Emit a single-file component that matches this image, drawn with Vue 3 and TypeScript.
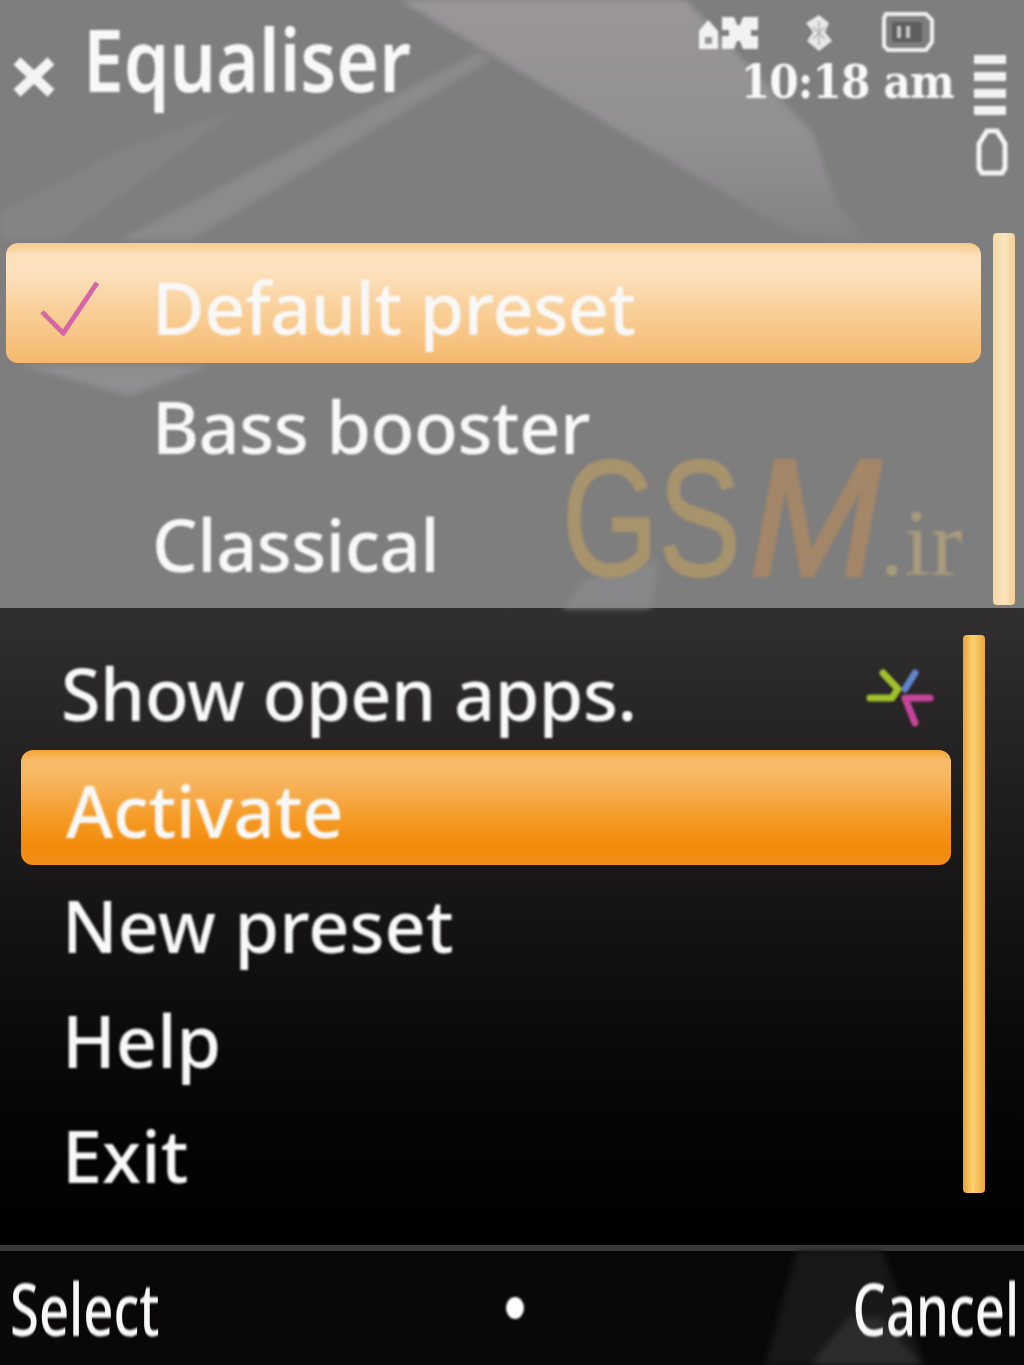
<template>
  <div class="screen">
    <section class="top">
      <svg class="backdrop" viewBox="0 0 1024 608" preserveAspectRatio="none" aria-hidden="true">
        <defs>
          <linearGradient id="fade" x1="0" y1="0" x2="0" y2="1">
            <stop offset="0" stop-color="#9a969a" />
            <stop offset="0.6" stop-color="#928f92" />
            <stop offset="1" stop-color="#828182" />
          </linearGradient>
        </defs>
        <polygon points="400,0 686,0 813,133 838,205 870,245 790,232" fill="url(#fade)" />
        <polygon points="478,52 490,60 190,240 120,240" fill="#8e8e8e" opacity="0.8" />
        <polygon points="0,213 120,150 240,108 60,240 0,240" fill="#888" opacity="0.7" />
        <polygon points="20,365 210,365 130,396" fill="#8f8f92" />
        <polygon points="562,608 585,580 660,560 650,608" fill="#88888a" />
      </svg>

      <header class="header">
        <svg class="close" viewBox="0 0 44 40" aria-hidden="true">
          <path d="M5 4 L39 36 M39 4 L5 36" stroke="#f4f4f4" stroke-width="10" />
        </svg>
        <h1 class="title">Equaliser</h1>
        <div class="status">
          <div class="status-icons">
            <svg class="ic-net" viewBox="0 0 62 36" aria-hidden="true">
              <path d="M1 34 V16 L10 5 L20 16 V34 Z M7 22 h7 v7 h-7 Z" fill="#f2f2f2" fill-rule="evenodd" />
              <path d="M24 2 h12 l3 8 h3 l3 -8 h15 v13 h-7 v6 h7 v13 H45 l-3 -8 h-3 l-3 8 H24 V21 h7 v-6 h-7 Z" fill="#f2f2f2" />
            </svg>
            <svg class="ic-bt" viewBox="0 0 28 36" aria-hidden="true">
              <path d="M14 0 L24 8 L20 17 L27 26 L14 36 L2 26 L8 17 L1 8 Z" fill="#e8e8e8" />
              <path d="M14 6 V30 M8 12 L20 24 M8 24 L20 12" stroke="#b0b0b0" stroke-width="1.5" />
            </svg>
            <svg class="ic-sim" viewBox="0 0 52 40" aria-hidden="true">
              <path d="M4 2 H44 L50 8 V30 L44 38 H6 L2 34 V6 Z" fill="none" stroke="#f0f0f0" stroke-width="4" />
              <rect x="10" y="10" width="30" height="20" fill="#5e5e5e" />
              <path d="M17 14 v12 M26 14 v12" stroke="#c8c8c8" stroke-width="4" />
            </svg>
          </div>
          <div class="clock">10:18 am</div>
        </div>
        <div class="signal">
          <div class="bars">
            <i v-for="n in 4" :key="n"></i>
          </div>
          <svg class="ic-batt" viewBox="0 0 32 48" aria-hidden="true">
            <path d="M3 16 L11 3 H21 L29 16 V40 L26 45 H6 L3 40 Z" fill="none" stroke="#f4f4f4" stroke-width="5" />
          </svg>
        </div>
      </header>

      <div class="list-wrap">
        <ul class="list">
          <li
            v-for="(name, i) in presets"
            :key="name"
            class="row"
            :class="{ active: i === 0 }"
          >
            <svg v-if="i === 0" class="check" viewBox="0 0 64 58" aria-hidden="true">
              <path d="M3 33 L25 55 L60 3" fill="none" stroke="#d665a8" stroke-width="5" />
            </svg>
            <span class="row-text">{{ name }}</span>
          </li>
        </ul>
        <div class="scroll light"></div>
      </div>

      <div class="watermark"><span class="gs">GS</span><span class="m">M</span><span class="ir">.ir</span></div>
    </section>

    <section class="menu">
      <div class="menu-body">
        <ul class="menu-list">
          <li
            v-for="item in menuItems"
            :key="item"
            class="menu-row"
            :class="{ active: item === 'Activate', first: item === 'Show open apps.' }"
          >
            <span>{{ item }}</span>
            <svg v-if="item === 'Show open apps.'" class="apps" viewBox="0 0 68 60" aria-hidden="true">
              <path d="M17 6 L32 22 L26 31 L4 31" fill="none" stroke="#a0c02c" stroke-width="7" stroke-linecap="round" stroke-linejoin="round" />
              <path d="M49 6 L39 22" stroke="#5f86c8" stroke-width="7" stroke-linecap="round" />
              <path d="M64 31 H39 L49 56" fill="none" stroke="#c8459a" stroke-width="7" stroke-linecap="round" stroke-linejoin="round" />
            </svg>
          </li>
        </ul>
        <div class="scroll amber"></div>
      </div>
    </section>

    <footer class="softkeys">
      <svg class="backdrop" viewBox="0 0 1024 113" preserveAspectRatio="none" aria-hidden="true">
        <polygon points="797,0 882,0 925,113 765,113" fill="#1a1719" />
        <polygon points="850,65 880,65 921,113 810,113" fill="#2e2b2e" />
      </svg>
      <span class="key">Select</span>
      <span class="dot"></span>
      <span class="key right">Cancel</span>
    </footer>
  </div>
</template>

<script setup lang="ts">
const presets: string[] = ['Default preset', 'Bass booster', 'Classical']
const menuItems: string[] = ['Show open apps.', 'Activate', 'New preset', 'Help', 'Exit']
</script>

<style>
html,
body {
  margin: 0;
  background: #000;
}
</style>

<style scoped>
.screen {
  position: relative;
  width: 1024px;
  height: 1365px;
  display: flex;
  flex-direction: column;
  overflow: hidden;
  font-family: "Noto Sans", "DejaVu Sans", sans-serif;
  font-weight: 500;
  color: #f8f8f8;
}
.top {
  position: relative;
  height: 608px;
  flex: none;
  background: #7e7e7e;
}
.backdrop {
  position: absolute;
  inset: 0;
  width: 100%;
  height: 100%;
  filter: blur(3px);
}
.header {
  position: relative;
  height: 233px;
  display: flex;
  align-items: flex-start;
  box-sizing: border-box;
  padding: 12px 15px 0 12px;
}
.close {
  width: 44px;
  height: 40px;
  margin-top: 45px;
  filter: blur(1px);
}
.title {
  flex: none;
  margin: -12px 0 0 27px;
  font-size: 86px;
  font-weight: 600;
  line-height: 118px;
  white-space: nowrap;
  transform: scaleX(0.85);
  transform-origin: left center;
  filter: blur(1px);
}
.status {
  margin-left: auto;
  width: 256px;
  display: flex;
  flex-direction: column;
  align-items: flex-end;
}
.status-icons {
  display: flex;
  align-items: flex-start;
  gap: 45px;
  padding-right: 23px;
  filter: blur(1px);
}
.ic-net {
  width: 62px;
  height: 36px;
  margin-top: 3px;
}
.ic-bt {
  width: 28px;
  height: 36px;
  margin-top: 3px;
}
.ic-sim {
  width: 52px;
  height: 40px;
  margin-left: 4px;
}
.clock {
  margin-top: 2px;
  padding-right: 3px;
  font-family: "DejaVu Serif", "Liberation Serif", serif;
  font-size: 46px;
  font-weight: 700;
  line-height: 56px;
  white-space: nowrap;
  letter-spacing: -1px;
  transform: scaleX(0.92);
  transform-origin: right center;
  filter: blur(1px);
}
.signal {
  width: 34px;
  margin-left: 18px;
  display: flex;
  flex-direction: column;
  align-items: center;
  filter: blur(0.8px);
}
.bars {
  display: flex;
  flex-direction: column;
  gap: 8px;
  margin: 43px 4px 0 0;
}
.bars i {
  display: block;
  width: 32px;
  height: 9px;
  background: #f2f2f2;
}
.ic-batt {
  width: 32px;
  height: 48px;
  margin-top: 13px;
}
.list-wrap {
  position: relative;
  display: flex;
  padding-left: 6px;
  padding-right: 9px;
  height: 372px;
}
.list {
  list-style: none;
  margin: 10px 0 0;
  padding: 0;
  width: 975px;
  flex: none;
}
.row {
  position: relative;
  display: flex;
  align-items: center;
  height: 118px;
  padding-left: 146px;
  box-sizing: border-box;
  font-size: 72px;
  letter-spacing: -0.5px;
}
.row.active {
  height: 120px;
  margin-bottom: 4px;
  padding-top: 8px;
  border-radius: 12px;
  background: linear-gradient(#f6c98a 0%, #fde0bb 10%, #fde2c0 22%, #f9d09a 55%, #f6bf7a 88%, #f4b76c 100%);
  filter: blur(0.6px);
}
.row-text {
  display: block;
  white-space: nowrap;
  filter: blur(1px);
}
.check {
  position: absolute;
  left: 33px;
  top: 37px;
  width: 62px;
  height: 56px;
}
.scroll {
  flex: none;
  width: 22px;
  margin-left: 12px;
  border-radius: 4px;
  filter: blur(0.6px);
}
.scroll.light {
  background: linear-gradient(90deg, #f5d7a0, #fbe5bf 50%, #f3cf96);
}
.scroll.amber {
  background: linear-gradient(90deg, #e9a238, #fdd36f 45%, #eaa43c);
  margin-top: 27px;
  height: 558px;
  margin-left: 12px;
}
.watermark {
  position: absolute;
  left: 562px;
  top: 448px;
  display: flex;
  align-items: baseline;
  font-family: "Liberation Sans", sans-serif;
  font-size: 165px;
  font-weight: 400;
  line-height: 140px;
  color: #a8946c;
  filter: blur(1.4px);
}
.gs {
  -webkit-text-stroke: 2px #a8946c;
  transform: scaleX(0.75);
  transform-origin: left center;
  margin-right: -50px;
}
.m {
  font-style: italic;
  color: #a48668;
  -webkit-text-stroke: 4px #a48668;
  transform: scaleX(0.95);
  transform-origin: left center;
  margin-right: -2px;
}
.ir {
  font-family: "Liberation Serif", serif;
  font-size: 96px;
  margin-left: -6px;
  color: #a89a7c;
}
.menu {
  height: 637px;
  flex: none;
  background: linear-gradient(#322f31 0%, #262325 20%, #141213 50%, #050505 80%, #000 100%);
}
.menu-body {
  display: flex;
  align-items: flex-start;
  padding-left: 21px;
}
.menu-list {
  list-style: none;
  margin: 27px 0 0;
  padding: 0;
  width: 930px;
  flex: none;
  font-size: 72px;
}
.menu-row {
  display: flex;
  align-items: center;
  justify-content: space-between;
  height: 115px;
  padding: 4px 0 0 41px;
  box-sizing: border-box;
}
.menu-row span {
  display: block;
  white-space: nowrap;
  filter: blur(1px);
}
.menu-row.first {
  padding: 0 17px 0 40px;
  letter-spacing: -0.5px;
}
.menu-row.active {
  padding-left: 45px;
  border-radius: 12px;
  background: linear-gradient(#f3a431 0%, #f8bd6c 10%, #f7b25a 30%, #f59a24 60%, #f28a0a 85%, #f08f1a 100%);
  filter: blur(0.6px);
}
.apps {
  width: 68px;
  height: 60px;
  margin-top: 8px;
  filter: blur(1px);
}
.softkeys {
  position: relative;
  flex: 1;
  display: grid;
  grid-template-columns: 1fr auto 1fr;
  align-items: center;
  padding: 0 5px 0 10px;
  background: #0a0708;
  border-top: 6px solid #3b3a3b;
  font-size: 72px;
}
.key {
  position: relative;
  white-space: nowrap;
  transform: scaleX(0.73);
  transform-origin: left center;
  filter: blur(1px);
}
.key.right {
  justify-self: end;
  transform-origin: right center;
}
.dot {
  position: relative;
  width: 18px;
  height: 22px;
  border-radius: 50%;
  background: #fff;
  filter: blur(1px);
}
</style>
